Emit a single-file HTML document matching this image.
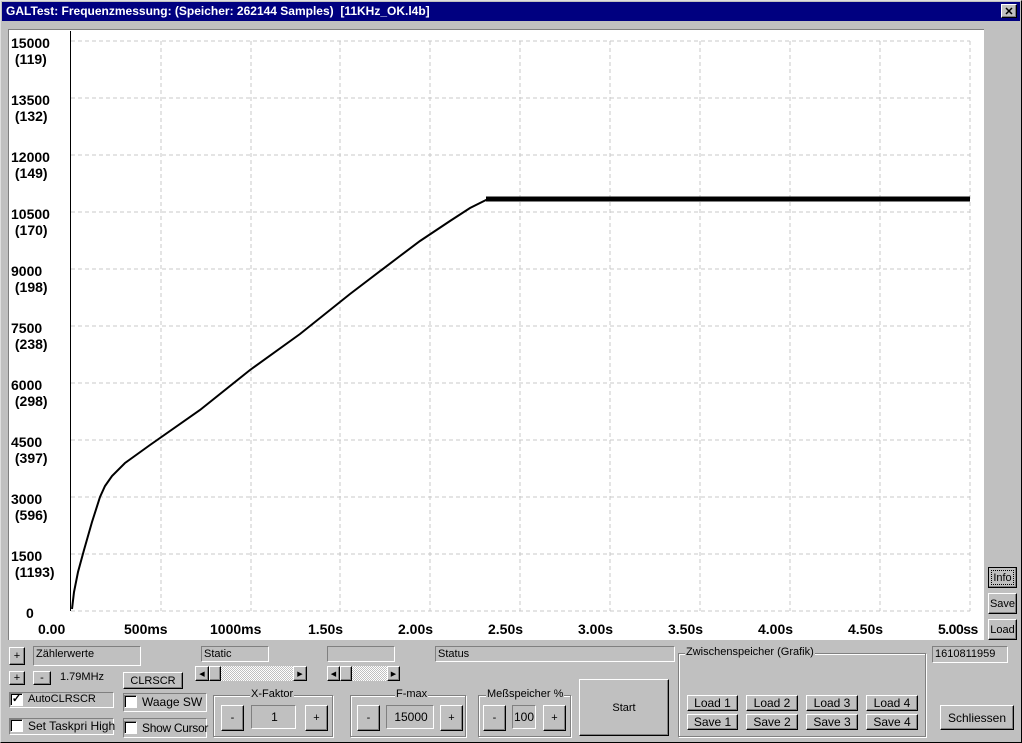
<!DOCTYPE html><html><head><meta charset="utf-8"><style>
*{box-sizing:border-box}
body{margin:0;width:1022px;height:743px;background:#c0c0c0;font-family:"Liberation Sans",sans-serif;font-size:11px;position:relative;overflow:hidden}
.a{position:absolute}
.btn{position:absolute;background:#c0c0c0;border:1px solid;border-color:#fff #000 #000 #fff;box-shadow:inset -1px -1px 0 #808080;display:flex;align-items:center;justify-content:center;font-size:11px}
.sunk{position:absolute;border:1px solid;border-color:#808080 #fff #fff #808080;padding-left:2px;line-height:14px;font-size:11px}
.grp{position:absolute;border:1px solid #808080;box-shadow:1px 1px 0 #fff,inset 1px 1px 0 #fff}
.grp span{position:absolute;top:-8px;background:#c0c0c0;padding:0 1px;font-size:11px}
.cb{position:absolute;width:13px;height:13px;background:#fff;border:1px solid;border-color:#808080 #fff #fff #808080;box-shadow:inset 1px 1px 0 #000}
.lab{position:absolute;font-weight:bold;font-size:14px;line-height:16px}
</style></head><body>
<div class="a" style="left:0;top:0;width:1022px;height:743px;border:1px solid;border-color:#dfdfdf #000 #000 #dfdfdf"></div>
<div class="a" style="left:2px;top:2px;width:1018px;height:19px;background:#000080;color:#fff;font-weight:bold;font-size:12px;line-height:19px;padding-left:4px">GALTest: Frequenzmessung: (Speicher: 262144 Samples)&nbsp; [11KHz_OK.l4b]</div>
<div class="btn" style="left:1001px;top:4px;width:16px;height:14px;font-weight:bold;font-size:11px">✕</div>
<div class="a" style="left:8px;top:29px;width:976px;height:611px;background:#fff;border-top:1px solid #808080;border-left:1px solid #808080"></div>
<svg class="a" style="left:0;top:0" width="1022" height="743">
<g stroke="#c8c8c8" stroke-dasharray="4,3" fill="none">
<path d="M71 41H970M71 98H970M71 155H970M71 212H970M71 269H970M71 326H970M71 383H970M71 440H970M71 497H970M71 554H970M71 611H970"/>
<path d="M161 41V611M251 41V611M340 41V611M430 41V611M520 41V611M610 41V611M700 41V611M790 41V611M880 41V611M970 41V611"/>
</g>
<path d="M70.5 31V611" stroke="#000"/>
<path d="M72 609L74 592L78 572L84 550L92 522L100 497L105 486L112 476L125 463L150 445L200 410L250 370L300 334L350 294L400 256L420 241L450 221L470 208L488 199" stroke="#000" stroke-width="2" fill="none"/>
<path d="M486 199H970" stroke="#000" stroke-width="5"/>
</svg>
<div class="lab" style="left:11px;top:35px">15000<br>&nbsp;(119)</div>
<div class="lab" style="left:11px;top:92px">13500<br>&nbsp;(132)</div>
<div class="lab" style="left:11px;top:149px">12000<br>&nbsp;(149)</div>
<div class="lab" style="left:11px;top:206px">10500<br>&nbsp;(170)</div>
<div class="lab" style="left:11px;top:263px">9000<br>&nbsp;(198)</div>
<div class="lab" style="left:11px;top:320px">7500<br>&nbsp;(238)</div>
<div class="lab" style="left:11px;top:377px">6000<br>&nbsp;(298)</div>
<div class="lab" style="left:11px;top:434px">4500<br>&nbsp;(397)</div>
<div class="lab" style="left:11px;top:491px">3000<br>&nbsp;(596)</div>
<div class="lab" style="left:11px;top:548px">1500<br>&nbsp;(1193)</div>
<div class="lab" style="left:26px;top:605px">0</div>
<div class="lab" style="left:38px;top:621px">0.00</div>
<div class="lab" style="left:124px;top:621px">500ms</div>
<div class="lab" style="left:210px;top:621px">1000ms</div>
<div class="lab" style="left:308px;top:621px">1.50s</div>
<div class="lab" style="left:398px;top:621px">2.00s</div>
<div class="lab" style="left:488px;top:621px">2.50s</div>
<div class="lab" style="left:578px;top:621px">3.00s</div>
<div class="lab" style="left:668px;top:621px">3.50s</div>
<div class="lab" style="left:758px;top:621px">4.00s</div>
<div class="lab" style="left:848px;top:621px">4.50s</div>
<div class="lab" style="left:938px;top:621px;letter-spacing:-0.5px">5.00ss</div>
<div class="btn" style="left:988px;top:567px;width:29px;height:21px;border:1px solid #000;outline:1px dotted #000;outline-offset:-4px">Info</div>
<div class="btn" style="left:988px;top:593px;width:29px;height:21px">Save</div>
<div class="btn" style="left:988px;top:619px;width:29px;height:21px">Load</div>
<div class="btn" style="left:9px;top:647px;width:16px;height:18px">+</div>
<div class="sunk" style="left:33px;top:646px;width:108px;height:20px">Zählerwerte</div>
<div class="btn" style="left:9px;top:671px;width:16px;height:14px">+</div>
<div class="btn" style="left:33px;top:671px;width:18px;height:14px">-</div>
<div class="a" style="left:60px;top:671px">1.79MHz</div>
<div class="btn" style="left:123px;top:672px;width:60px;height:17px">CLRSCR</div>
<div class="sunk" style="left:201px;top:646px;width:68px;height:16px">Static</div>
<div class="sunk" style="left:327px;top:646px;width:68px;height:16px"></div>
<div class="a" style="left:195px;top:666px;width:112px;height:15px;background:repeating-conic-gradient(#c0c0c0 0 25%,#fff 0 50%) 0 0/2px 2px"></div>
<div class="btn" style="left:195px;top:666px;width:14px;height:15px;font-size:7px">◀</div>
<div class="btn" style="left:209px;top:666px;width:12px;height:15px"></div>
<div class="btn" style="left:293px;top:666px;width:14px;height:15px;font-size:7px">▶</div>
<div class="a" style="left:327px;top:666px;width:73px;height:15px;background:repeating-conic-gradient(#c0c0c0 0 25%,#fff 0 50%) 0 0/2px 2px"></div>
<div class="btn" style="left:327px;top:666px;width:13px;height:15px;font-size:7px">◀</div>
<div class="btn" style="left:340px;top:666px;width:12px;height:15px"></div>
<div class="btn" style="left:387px;top:666px;width:13px;height:15px;font-size:7px">▶</div>
<div class="sunk" style="left:435px;top:646px;width:240px;height:16px">Status</div>
<div class="sunk" style="left:9px;top:692px;width:105px;height:16px"></div>
<div class="cb" style="left:10px;top:693px;font-size:11px;line-height:10px;text-align:center;font-weight:bold">✓</div>
<div class="a" style="left:28px;top:693px">AutoCLRSCR</div>
<div class="sunk" style="left:9px;top:718px;width:105px;height:17px"></div>
<div class="cb" style="left:10px;top:719px"></div>
<div class="a" style="left:28px;top:719px;font-size:12px">Set Taskpri High</div>
<div class="sunk" style="left:123px;top:693px;width:84px;height:19px"></div>
<div class="cb" style="left:124px;top:695px"></div>
<div class="a" style="left:142px;top:695px;font-size:12px">Waage SW</div>
<div class="sunk" style="left:123px;top:718px;width:84px;height:20px"></div>
<div class="cb" style="left:124px;top:721px"></div>
<div class="a" style="left:142px;top:721px;font-size:12px;letter-spacing:-0.3px">Show Cursor</div>
<div class="grp" style="left:213px;top:695px;width:120px;height:42px"><span style="left:36px">X-Faktor</span></div>
<div class="btn" style="left:221px;top:705px;width:23px;height:26px">-</div>
<div class="sunk" style="left:251px;top:705px;width:45px;height:24px;text-align:center;line-height:22px;font-size:12px">1</div>
<div class="btn" style="left:305px;top:705px;width:23px;height:26px">+</div>
<div class="grp" style="left:350px;top:695px;width:116px;height:42px"><span style="left:44px">F-max</span></div>
<div class="btn" style="left:357px;top:705px;width:23px;height:26px">-</div>
<div class="sunk" style="left:386px;top:705px;width:48px;height:24px;text-align:center;line-height:22px;font-size:12px">15000</div>
<div class="btn" style="left:440px;top:705px;width:23px;height:26px">+</div>
<div class="grp" style="left:478px;top:695px;width:93px;height:42px"><span style="left:7px">Meßspeicher %</span></div>
<div class="btn" style="left:483px;top:705px;width:23px;height:26px">-</div>
<div class="sunk" style="left:512px;top:705px;width:24px;height:24px;text-align:center;line-height:22px;font-size:12px;padding:0">100</div>
<div class="btn" style="left:543px;top:705px;width:23px;height:26px">+</div>
<div class="btn" style="left:579px;top:679px;width:90px;height:57px">Start</div>
<div class="grp" style="left:678px;top:653px;width:248px;height:84px"><span style="left:6px">Zwischenspeicher (Grafik)</span></div>
<div class="btn" style="left:687px;top:695px;width:51px;height:16px;font-size:12px">Load 1</div>
<div class="btn" style="left:746px;top:695px;width:52px;height:16px;font-size:12px">Load 2</div>
<div class="btn" style="left:806px;top:695px;width:52px;height:16px;font-size:12px">Load 3</div>
<div class="btn" style="left:866px;top:695px;width:52px;height:16px;font-size:12px">Load 4</div>
<div class="btn" style="left:687px;top:714px;width:51px;height:16px;font-size:12px">Save 1</div>
<div class="btn" style="left:746px;top:714px;width:52px;height:16px;font-size:12px">Save 2</div>
<div class="btn" style="left:806px;top:714px;width:52px;height:16px;font-size:12px">Save 3</div>
<div class="btn" style="left:866px;top:714px;width:52px;height:16px;font-size:12px">Save 4</div>
<div class="sunk" style="left:932px;top:646px;width:76px;height:17px">1610811959</div>
<div class="btn" style="left:940px;top:705px;width:74px;height:25px;font-size:12px">Schliessen</div>
</body></html>
